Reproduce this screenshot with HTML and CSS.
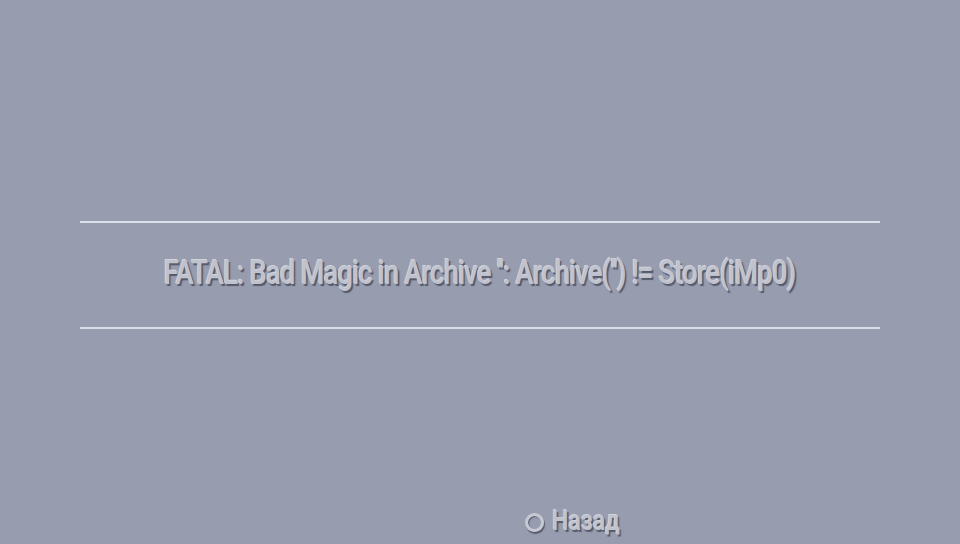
FILE: index.html
```html
<!DOCTYPE html>
<html>
<head>
  <meta charset="UTF-8">
  <title>Ошибка</title>
  <link rel="stylesheet" href="styles.css">
</head>
<body>
  <div class="screen">
    <div class="message-box">
      <p class="message">FATAL: Bad Magic in Archive '': Archive('') != Store(iMp0)</p>
    </div>

    <div class="footer">
      <span class="hint">
        <span class="btn-circle"></span>
        <span class="hint-label">Назад</span>
      </span>
    </div>
  </div>
</body>
</html>
```

FILE: styles.css
```css
html, body {
  margin: 0;
  padding: 0;
  height: 100%;
}
body {
  background-color: #979caf;
  font-family: Roboto, "Liberation Sans", sans-serif;
  overflow: hidden;
}
.screen {
  height: 544px;
  display: flex;
  flex-direction: column;
  padding: 221px 80px 0;
  box-sizing: border-box;
}
.message-box {
  border-top: 2px solid #dcdfe9;
  border-bottom: 2px solid #dcdfe9;
  height: 104px;
  display: flex;
  align-items: center;
  justify-content: center;
}
.message {
  margin: 0 0 6px;
  font-size: 33px;
  font-weight: 500;
  letter-spacing: -1px;
  color: #c0c3cd;
  white-space: nowrap;
  transform: scaleX(0.83);
  text-shadow: -1px -1px 0 #d0d3dc, 2px 2px 1px #555a6b;
}
.footer {
  flex: 1;
  display: flex;
  align-items: flex-end;
  justify-content: center;
  padding-left: 196px;
  padding-bottom: 7px;
}
.hint {
  display: flex;
  align-items: center;
  gap: 8px;
}
.btn-circle {
  width: 13px;
  height: 13px;
  border: 3px solid #c6c9d3;
  border-radius: 50%;
  margin-top: 3px;
  box-shadow: 1px 2px 1px #555a6b, inset 1px 1px 1px #555a6b;
}
.hint-label {
  font-size: 27px;
  font-weight: 500;
  color: #c0c3cd;
  transform: scaleX(0.86);
  transform-origin: left center;
  text-shadow: -1px -1px 0 #d0d3dc, 2px 2px 1px #555a6b;
}
```
